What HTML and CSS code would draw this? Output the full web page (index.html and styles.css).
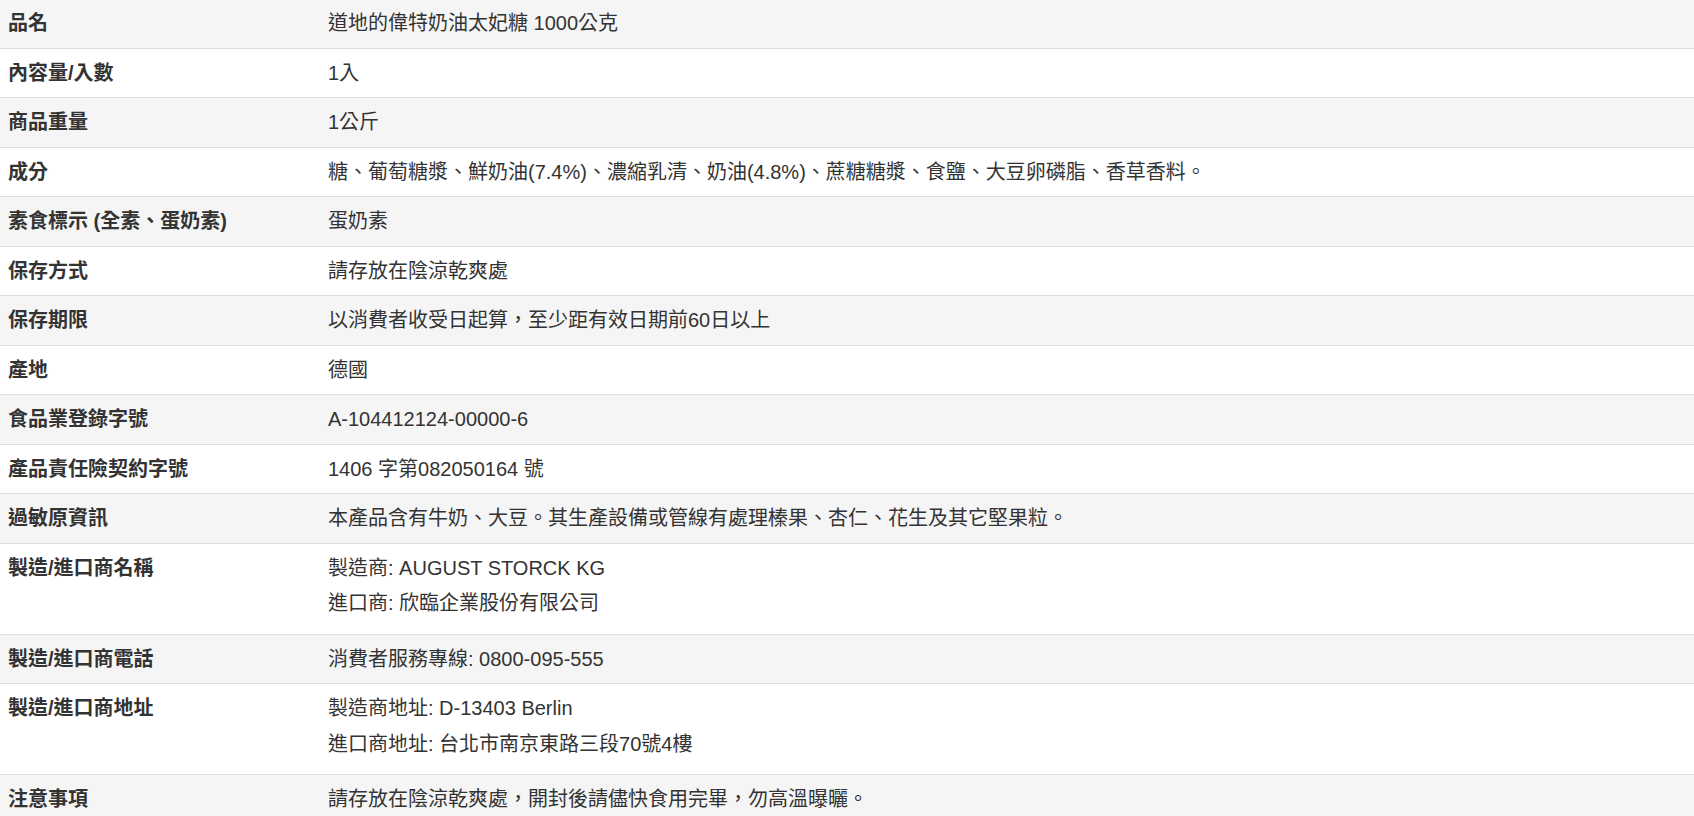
FILE: index.html
```html
<!DOCTYPE html>
<html lang="zh-Hant">
<head>
<meta charset="utf-8">
<title>商品規格</title>
<link rel="stylesheet" href="styles.css">
</head>
<body>
<table class="spec">
  <tbody>
    <tr><th>品名</th><td>道地的偉特奶油太妃糖 1000公克</td></tr>
    <tr><th>內容量/入數</th><td>1入</td></tr>
    <tr><th>商品重量</th><td>1公斤</td></tr>
    <tr><th>成分</th><td>糖、葡萄糖漿、鮮奶油(7.4%)、濃縮乳清、奶油(4.8%)、蔗糖糖漿、食鹽、大豆卵磷脂、香草香料。</td></tr>
    <tr><th>素食標示 (全素、蛋奶素)</th><td>蛋奶素</td></tr>
    <tr><th>保存方式</th><td>請存放在陰涼乾爽處</td></tr>
    <tr><th>保存期限</th><td>以消費者收受日起算，至少距有效日期前60日以上</td></tr>
    <tr><th>產地</th><td>德國</td></tr>
    <tr><th>食品業登錄字號</th><td>A-104412124-00000-6</td></tr>
    <tr><th>產品責任險契約字號</th><td>1406 字第082050164 號</td></tr>
    <tr><th>過敏原資訊</th><td>本產品含有牛奶、大豆。其生產設備或管線有處理榛果、杏仁、花生及其它堅果粒。</td></tr>
    <tr><th>製造/進口商名稱</th><td><p class="line">製造商: AUGUST STORCK KG</p><p class="line">進口商: 欣臨企業股份有限公司</p></td></tr>
    <tr><th>製造/進口商電話</th><td>消費者服務專線: 0800-095-555</td></tr>
    <tr><th>製造/進口商地址</th><td><p class="line">製造商地址: D-13403 Berlin</p><p class="line">進口商地址: 台北市南京東路三段70號4樓</p></td></tr>
    <tr><th>注意事項</th><td>請存放在陰涼乾爽處，開封後請儘快食用完畢，勿高溫曝曬。</td></tr>
  </tbody>
</table>
</body>
</html>
```

FILE: styles.css
```css
html, body {
  margin: 0;
  padding: 0;
  background: #fff;
}

body {
  font-family: "Liberation Sans", Arial, "Noto Sans CJK TC", sans-serif;
  font-size: 20px;
  line-height: 28.5px;
  color: #333;
}

.spec {
  width: 100%;
  border-collapse: collapse;
  border-spacing: 0;
  margin-top: -2px;
}

.spec th,
.spec td {
  padding: 10px 8px;
  border-top: 1px solid #ddd;
  vertical-align: top;
  text-align: left;
}

.spec th {
  width: 304px;
  font-weight: 700;
}

.spec tbody tr:nth-child(odd) {
  background: #f5f5f5;
}

.spec .line {
  margin: 0 0 6px;
}

.spec .line + .line {
  margin-top: 7px;
}
```
